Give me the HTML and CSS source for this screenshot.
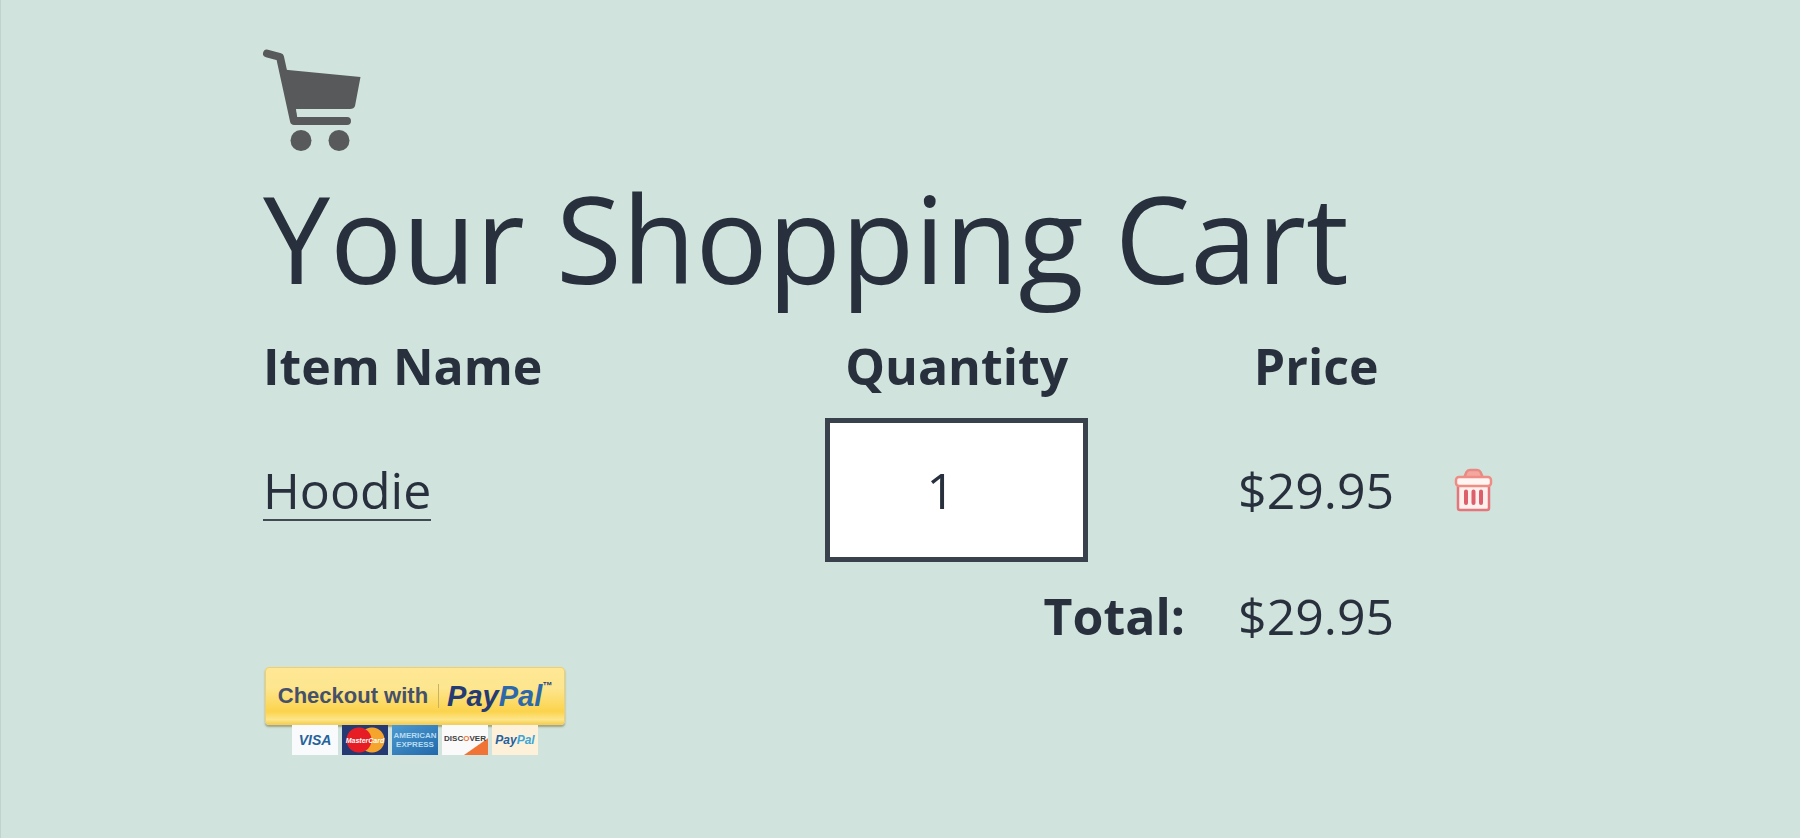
FILE: index.html
```html
<!DOCTYPE html>
<html lang="en">
<head>
<meta charset="utf-8">
<title>Your Shopping Cart</title>
<link rel="stylesheet" href="styles.css">
</head>
<body>
<main class="cart">
  <svg class="cart-icon" viewBox="0 0 98 102" aria-hidden="true">
    <path d="M4 4.500 L17 8 L31 72 H84" fill="none" stroke="#58595b" stroke-width="8" stroke-linecap="round" stroke-linejoin="round"/>
    <path d="M20 20.500 L97.500 28 L92 57 Q91 60 87 60 H33 L34 70 H29 Z" fill="#58595b"/>
    <circle cx="38" cy="91.500" r="10.500" fill="#58595b"/>
    <circle cx="76" cy="91.500" r="10.500" fill="#58595b"/>
  </svg>
  <h1 class="cart-title">Your Shopping Cart</h1>
  <table class="items">
    <colgroup>
      <col class="col-name"><col class="col-quantity"><col class="col-price"><col class="col-remove">
    </colgroup>
    <thead>
      <tr>
        <th class="name" scope="col">Item Name</th>
        <th scope="col" id="quantity-label">Quantity</th>
        <th scope="col">Price</th>
        <td></td>
      </tr>
    </thead>
    <tbody>
      <tr class="item">
        <td class="name"><a class="product" href="#hoodie">Hoodie</a></td>
        <td><input class="quantity" type="text" inputmode="numeric" value="1" aria-labelledby="quantity-label"></td>
        <td>$29.95</td>
        <td>
          <button class="remove" type="button" aria-label="Remove Hoodie">
            <svg class="remove-icon" viewBox="0 0 39 44" aria-hidden="true">
              <path d="M10 10 L12.500 4 Q13.500 2 16 2 H23 Q25.500 2 26.500 4 L29 10 Z" fill="#f3a79f" stroke="#e88a83" stroke-width="2.500"/>
              <path d="M4 16 H35 V40 Q35 42 33 42 H6 Q4 42 4 40 Z" fill="#fdf0ed" stroke="#e3757b" stroke-width="2.500"/>
              <rect x="2" y="9" width="35" height="9" rx="3" fill="#fff5f2" stroke="#ee8d85" stroke-width="2.500"/>
              <path d="M12 23.500 V35 M19.500 23.500 V35 M27 23.500 V35" stroke="#dc5f6b" stroke-width="4" stroke-linecap="round"/>
            </svg>
          </button>
        </td>
      </tr>
    </tbody>
    <tfoot>
      <tr>
        <th class="total" scope="row" colspan="2">Total:</th>
        <td>$29.95</td>
        <td></td>
      </tr>
    </tfoot>
  </table>
  <div class="checkout">
    <button class="paypal" type="button">
      <span class="paypal-text">Checkout with</span>
      <span class="paypal-logo">Pay<span class="pal">Pal</span><span class="tm">™</span></span>
    </button>
    <div class="cards">
      <span class="card visa">VISA</span>
      <span class="card mastercard"><span class="mastercard-text">MasterCard</span></span>
      <span class="card amex">AMERICAN<br>EXPRESS</span>
      <span class="card discover">DISC<span class="orange">O</span>VER</span>
      <span class="card paypal-card">Pay<span class="light">Pal</span></span>
    </div>
  </div>
</main>
</body>
</html>
```
FILE: styles.css
```css
* { box-sizing: border-box; }

body {
  margin: 0;
  min-height: 100vh;
  background: #d0e4dd;
  box-shadow: inset 1px 0 #c0d3cc;
  color: #28303d;
  font-family: "Segoe UI", "Open Sans", "Noto Sans", sans-serif;
  font-size: 50px;
}

.cart {
  max-width: 1274px;
  margin: 0 auto;
  padding: 49px 0 64px;
}

.cart-icon {
  display: block;
  width: 98px;
  height: 102px;
}

.cart-title {
  margin: 12px 0 18px;
  font-size: 120px;
  font-weight: 400;
  line-height: 150px;
  white-space: nowrap;
}

.items {
  width: 99%;
  table-layout: fixed;
  border-collapse: collapse;
  line-height: 70px;
  text-align: center;
}

.items th,
.items td { padding: 0; }

.items .name { text-align: left; }

.items .total {
  padding-right: 24px;
  text-align: right;
}

.items tfoot { line-height: 74px; }

.col-name { width: 35%; }
.col-quantity { width: 40%; }
.col-price { width: 17%; }
.col-remove { width: 8%; }

.item td {
  height: 178px;
  vertical-align: middle;
}

.product {
  display: inline-block;
  border-bottom: 2px solid #3f4a52;
  color: inherit;
  line-height: 58px;
  text-decoration: none;
}

.quantity {
  display: block;
  width: 263px;
  height: 144px;
  margin: 0 auto;
  padding: 0 32px 0 0;
  border: 5px solid #39414d;
  border-radius: 0;
  background: #fff;
  color: inherit;
  font: inherit;
  text-align: center;
}

.remove {
  display: block;
  margin: 0 auto;
  padding: 0;
  border: 0;
  background: none;
}

.remove-icon {
  display: block;
  width: 39px;
  height: 44px;
}

.checkout {
  display: flex;
  flex-direction: column;
  align-items: center;
  width: 304px;
  margin-top: 14px;
}

.paypal {
  display: flex;
  align-items: center;
  justify-content: center;
  gap: 8px;
  width: 300px;
  height: 58px;
  padding: 0;
  border: 1px solid #efd06a;
  border-radius: 4px;
  background: linear-gradient(#ffe795, #fde68f 35%, #fbd34c 78%, #fde58a 92%, #f5d056);
  box-shadow: 0 2px 2px #a3a37d;
  color: #45506a;
  font-family: "Liberation Sans", Arial, sans-serif;
  white-space: nowrap;
}

.paypal-text {
  padding-right: 10px;
  border-right: 1px solid #c9b363;
  font-size: 22px;
  font-weight: 700;
  line-height: 24px;
}

.paypal-logo {
  color: #253b73;
  font-size: 29px;
  font-style: italic;
  font-weight: 700;
}

.pal { color: #2d69aa; }

.tm {
  font-size: 10px;
  vertical-align: top;
}

.cards {
  display: flex;
  gap: 4px;
}

.card {
  display: flex;
  align-items: center;
  justify-content: center;
  width: 46px;
  height: 30px;
  overflow: hidden;
  background: #f8fafb;
  font-family: "Liberation Sans", Arial, sans-serif;
  font-size: 11px;
  font-weight: 700;
  line-height: 11px;
}

.visa {
  color: #24629b;
  font-size: 14px;
  font-style: italic;
}

.mastercard {
  background:
    radial-gradient(circle at 17px 15px, #e61d25 12px, transparent 13px),
    radial-gradient(circle at 30px 15px, #f5a52c 12px, transparent 13px),
    #253a72;
}

.mastercard-text {
  color: #fff;
  font-size: 7px;
  font-style: italic;
}

.amex {
  background: linear-gradient(150deg, #4d9ad0, #2269ab);
  color: #b8dcf2;
  font-size: 8px;
  line-height: 9px;
  text-align: center;
}

.discover {
  padding-bottom: 4px;
  background: linear-gradient(145deg, #fafafa 72%, #ef7436 74%);
  color: #3c3d40;
  font-size: 8px;
}

.orange { color: #ef7436; }

.paypal-card {
  background: #fdf1d9;
  color: #25609f;
  font-size: 12px;
  font-style: italic;
}

.light { color: #3ea5d8; }
```
